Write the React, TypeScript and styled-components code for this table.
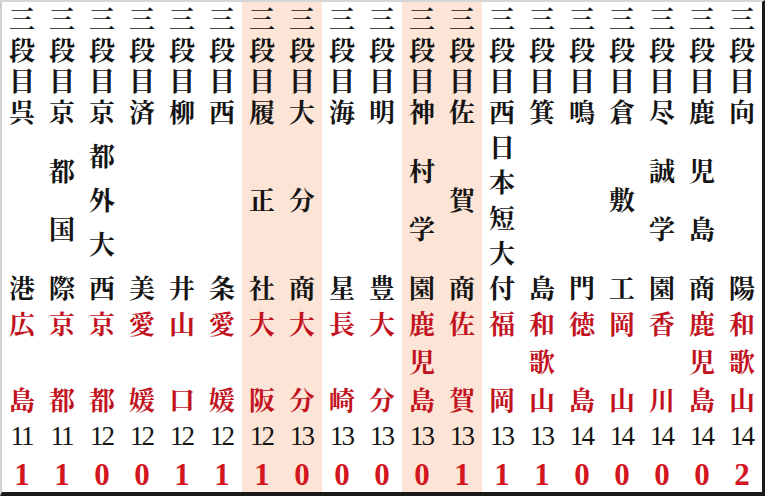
import styled, { createGlobalStyle } from "styled-components";

const GlobalStyle = createGlobalStyle`
  html, body {
    margin: 0;
    padding: 0;
    background: #ffffff;
  }
`;

type Entry = {
  school: string;
  pref: string;
  round: number;
  result: number;
  hl?: boolean;
};

const entries: Entry[] = [
  { school: "呉港", pref: "広島", round: 11, result: 1 },
  { school: "京都国際", pref: "京都", round: 11, result: 1 },
  { school: "京都外大西", pref: "京都", round: 12, result: 0 },
  { school: "済美", pref: "愛媛", round: 12, result: 0 },
  { school: "柳井", pref: "山口", round: 12, result: 1 },
  { school: "西条", pref: "愛媛", round: 12, result: 1 },
  { school: "履正社", pref: "大阪", round: 12, result: 1, hl: true },
  { school: "大分商", pref: "大分", round: 13, result: 0, hl: true },
  { school: "海星", pref: "長崎", round: 13, result: 0 },
  { school: "明豊", pref: "大分", round: 13, result: 0 },
  { school: "神村学園", pref: "鹿児島", round: 13, result: 0, hl: true },
  { school: "佐賀商", pref: "佐賀", round: 13, result: 1, hl: true },
  { school: "西日本短大付", pref: "福岡", round: 13, result: 1 },
  { school: "箕島", pref: "和歌山", round: 13, result: 1 },
  { school: "鳴門", pref: "徳島", round: 14, result: 0 },
  { school: "倉敷工", pref: "岡山", round: 14, result: 0 },
  { school: "尽誠学園", pref: "香川", round: 14, result: 0 },
  { school: "鹿児島商", pref: "鹿児島", round: 14, result: 0 },
  { school: "向陽", pref: "和歌山", round: 14, result: 2 },
];

const Frame = styled.div`
  width: 760px;
  height: 490px;
  border-top: 2px solid #d6d6d6;
  border-left: 2px solid #d0d0d0;
  border-right: 3px solid #1a1a1a;
  border-bottom: 4px solid #1a1a1a;
  display: grid;
  grid-template-columns: repeat(19, 40px);
  background: #ffffff;
  overflow: hidden;
`;

const Column = styled.div<{ $hl?: boolean }>`
  display: flex;
  flex-direction: column;
  align-items: center;
  background: ${(p) => (p.$hl ? "#fce4d6" : "transparent")};
  font-family: "Noto Serif CJK JP", "Noto Sans CJK JP", serif;
  font-weight: 700;
  font-size: 26px;
  color: #141414;
`;

const Char = styled.span`
  display: block;
  height: 31px;
  line-height: 31px;
  text-align: center;
`;

const Header = styled.div`
  display: flex;
  flex-direction: column;
  height: 93px;
`;

const School = styled.div`
  display: flex;
  flex-direction: column;
  justify-content: space-between;
  height: 207px;
`;

const Pref = styled.div`
  display: flex;
  flex-direction: column;
  justify-content: space-between;
  height: 107px;
  margin-top: 5px;
  color: #c2121e;
`;

const Round = styled.div`
  height: 44px;
  line-height: 44px;
  font-family: "Liberation Serif", serif;
  font-weight: 400;
  font-size: 27px;
  color: #141414;
  letter-spacing: -2px;
  padding-right: 1px;
`;

const Result = styled.div`
  height: 34px;
  line-height: 34px;
  font-family: "Liberation Serif", serif;
  font-weight: 700;
  font-size: 31px;
  color: #d4141e;
`;

const Chars = ({ text }: { text: string }) => (
  <>
    {Array.from(text).map((c, i) => (
      <Char key={i}>{c}</Char>
    ))}
  </>
);

export default function App() {
  return (
    <>
      <GlobalStyle />
      <Frame>
        {entries.map((e, i) => (
          <Column key={i} $hl={e.hl}>
            <Header>
              <Chars text="三段目" />
            </Header>
            <School>
              <Chars text={e.school} />
            </School>
            <Pref>
              <Chars text={e.pref} />
            </Pref>
            <Round>{e.round}</Round>
            <Result>{e.result}</Result>
          </Column>
        ))}
      </Frame>
    </>
  );
}
